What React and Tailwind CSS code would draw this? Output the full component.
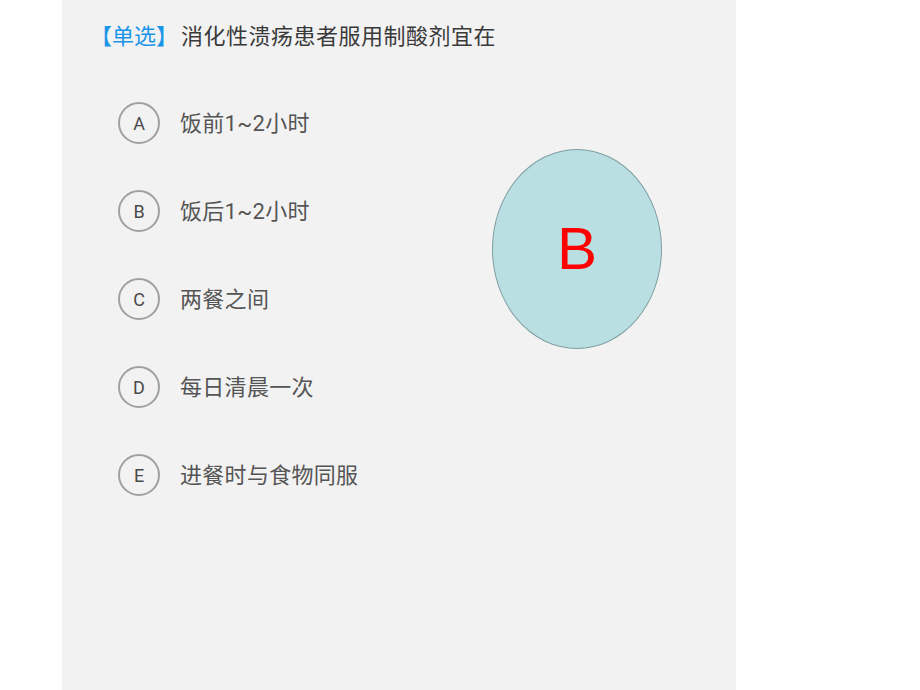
const options = [
  { key: 'A', text: '饭前1~2小时' },
  { key: 'B', text: '饭后1~2小时' },
  { key: 'C', text: '两餐之间' },
  { key: 'D', text: '每日清晨一次' },
  { key: 'E', text: '进餐时与食物同服' },
]

export default function App() {
  return (
    <div className="w-[920px] h-[690px] bg-white overflow-hidden" style={{ fontFamily: '"Roboto", "Noto Sans CJK SC", sans-serif' }}>
      <div className="relative ml-[62px] w-[674px] h-[690px] bg-[#f2f2f2]">
        {/* 题目 */}
        <div className="pt-[22px] pl-[28px] text-[22px] leading-[30px] text-[#3a3a3a]">
          <span className="text-[#1a95e8] mr-[3px]">【单选】</span>
          <span className="tracking-[0.5px]">消化性溃疡患者服用制酸剂宜在</span>
        </div>

        {/* 选项 */}
        <div className="mt-[50px] pl-[56px] flex flex-col gap-[46px]">
          {options.map(opt => (
            <div key={opt.key} className="flex items-center gap-[20px]">
              <div className="w-[42px] h-[42px] rounded-full border-2 border-[#a0a0a0] flex items-center justify-center text-[18px] text-[#4a4a4a]">
                {opt.key}
              </div>
              <div className="text-[22px] text-[#555] tracking-[0.3px]">{opt.text}</div>
            </div>
          ))}
        </div>

        {/* 答案 */}
        <div className="absolute left-[430px] top-[149px] w-[170px] h-[200px] rounded-[50%] bg-[#b9dfe3] border border-[#7f9ea2] flex items-center justify-center">
          <span className="text-[60px] leading-none text-[#ff0000]" style={{ fontFamily: '"Liberation Sans", sans-serif' }}>B</span>
        </div>
      </div>
    </div>
  )
}
